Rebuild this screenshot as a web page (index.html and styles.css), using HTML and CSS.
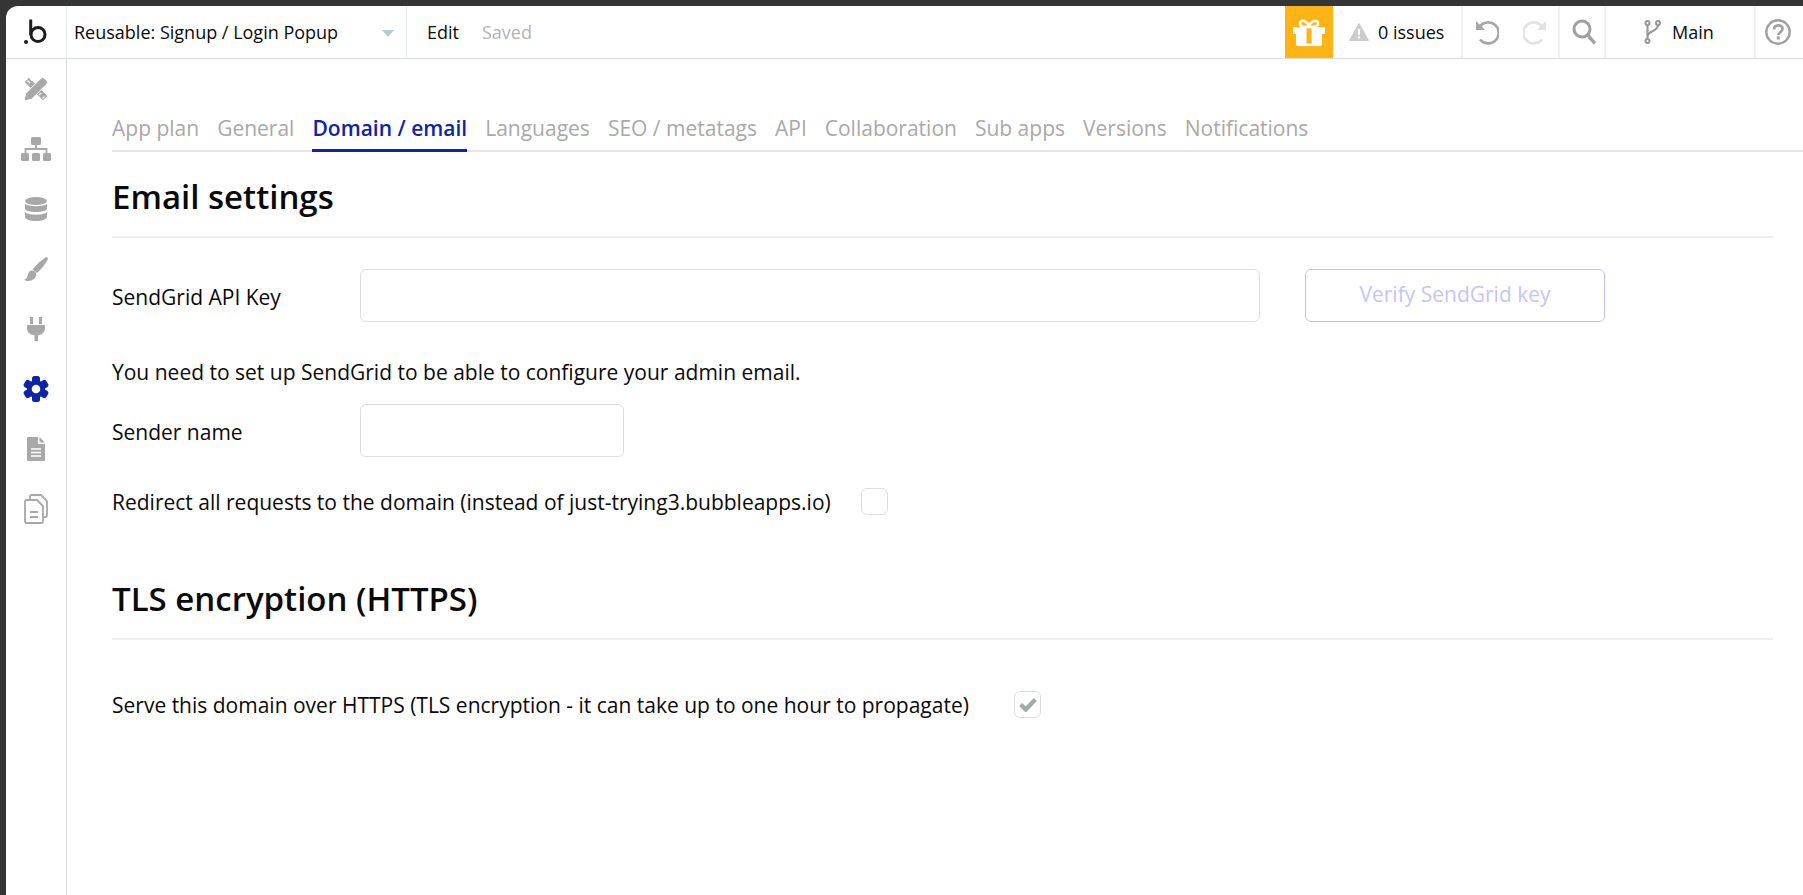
FILE: index.html
```html
<!DOCTYPE html>
<html lang="en">
<head>
<meta charset="utf-8">
<title>Domain / email</title>
<link rel="stylesheet" href="styles.css">
</head>
<body>
<div class="app">
  <header class="topbar">
    <div class="logo-cell">
      <svg class="logo" viewBox="0 0 24 28" width="24" height="28"><circle cx="2" cy="24" r="2" fill="#1c1c1c"/><circle cx="14" cy="16.500" r="7" fill="none" stroke="#1c1c1c" stroke-width="3"/><path d="M6.700 1.500V17" fill="none" stroke="#1c1c1c" stroke-width="3"/></svg>
    </div>
    <div class="page-select">
      <span>Reusable: Signup / Login Popup</span>
      <i class="caret"></i>
    </div>
    <div class="edit-status"><span class="edit">Edit</span><span class="saved">Saved</span></div>
    <div class="gift">
      <svg viewBox="0 0 32 27" width="32" height="27"><path d="M0 8h32v7H0zM3 15h26v10a2 2 0 0 1-2 2H5a2 2 0 0 1-2-2z" fill="#fff"/><rect x="13.500" y="8" width="5" height="16.500" fill="#fdb414"/><path d="M16 8c-3 0-9 .5-9-3.500 0-4.500 7.500-3.500 9 3.500zM16 8c3 0 9 .5 9-3.500 0-4.500-7.500-3.500-9 3.500z" fill="none" stroke="#fff" stroke-width="2.600"/></svg>
    </div>
    <div class="issues">
      <svg viewBox="0 0 20 18" width="20" height="18"><path d="M10 0.500 19.500 17.500H0.500z" fill="#ccc" stroke="#ccc" stroke-linejoin="round"/><path d="M8.800 6h2.400l-.4 6H9.200zM8.900 13.300h2.200v2.200H8.900z" fill="#fff"/></svg>
      <span>0 issues</span>
    </div>
    <div class="history">
      <svg viewBox="0 0 24 26" width="24" height="26"><path d="M4.500 8A10.500 10.500 0 1 1 5 20.500" fill="none" stroke="#a6a6a6" stroke-width="2.600"/><path d="M1 2v9h9z" fill="#a6a6a6"/></svg>
      <svg viewBox="0 0 24 26" width="24" height="26"><path d="M19.500 8A10.500 10.500 0 1 0 19 20.500" fill="none" stroke="#e2e2e2" stroke-width="2.600"/><path d="M23 2v9h-9z" fill="#e2e2e2"/></svg>
    </div>
    <div class="search">
      <svg viewBox="0 0 24 26" width="24" height="26"><circle cx="10" cy="10" r="8" fill="none" stroke="#a0a0a0" stroke-width="3"/><path d="M15.500 16 23 24.500" stroke="#a0a0a0" stroke-width="3.400" fill="none"/></svg>
    </div>
    <div class="branch">
      <svg viewBox="0 0 18 24" width="18" height="24"><g fill="none" stroke="#9b9b9b" stroke-width="2.200"><circle cx="3.500" cy="3" r="2"/><circle cx="3.500" cy="21" r="2"/><circle cx="14" cy="3" r="2"/><path d="M3.500 5v14M14 5c0 7-10.500 5-10.500 12"/></g></svg>
      <span>Main</span>
    </div>
    <div class="help">
      <svg viewBox="0 0 26 26" width="26" height="26"><circle cx="13" cy="13" r="11.700" fill="none" stroke="#a0a0a0" stroke-width="2.400"/><path d="M9 10.500c0-5.500 8.500-5.500 8.500-.5 0 3-4 3-4 6" fill="none" stroke="#a0a0a0" stroke-width="2.800"/><rect x="11.800" y="17.500" width="3" height="3" fill="#a0a0a0"/></svg>
    </div>
  </header>
  <div class="workspace">
    <nav class="sidebar">
      <a class="side-item">
        <svg viewBox="0 0 24 24" width="24" height="24"><path d="M.800 5 5 .800 11.500 7.300 7.300 11.500zM12.500 16.700 16.700 12.500 23.200 19 19 23.200z" fill="#a8a8a8"/><path d="M3.500 3.500 6 6M6.500 1.800 8.500 3.800M15 18l2-2M18.500 21.500l2-2" stroke="#fff" stroke-width="1.200"/><path d="M0 24l1.700-7.500L16.500 1.700c1.500-1.500 3-1.500 4.300 0l1.500 1.500c1.500 1.500 1.500 3 0 4.300L7.500 22.300z" fill="#a8a8a8" stroke="#fff" stroke-width="1"/></svg>
      </a>
      <a class="side-item">
        <svg viewBox="0 0 30 24" width="30" height="24"><path d="M15 6v6M4.500 17v-5h21v5" fill="none" stroke="#a8a8a8" stroke-width="1.800"/><rect x="10" y="0" width="10" height="8" rx="1.500" fill="#a8a8a8"/><rect x="0" y="16" width="8" height="8" rx="1.500" fill="#a8a8a8"/><rect x="11" y="16" width="8" height="8" rx="1.500" fill="#a8a8a8"/><rect x="22" y="16" width="8" height="8" rx="1.500" fill="#a8a8a8"/></svg>
      </a>
      <a class="side-item">
        <svg viewBox="0 0 22 24" width="22" height="24"><ellipse cx="11" cy="4" rx="11" ry="4" fill="#a8a8a8"/><path d="M0 6.500C2 10 20 10 22 6.500V12c-1 4-21 4-22 0zM0 15c2 3.500 20 3.500 22 0v5c-1 5.300-21 5.300-22 0z" fill="#a8a8a8"/></svg>
      </a>
      <a class="side-item">
        <svg viewBox="0 0 24 24" width="24" height="24"><path d="M8.500 12.500C12.500 7.500 17.500 3 21.500.500c1.700-.9 3 .3 2.200 2C21.500 7 17 12.500 13 16z" fill="#a8a8a8"/><path d="M7 13.500c2.500-.5 5 1 5.300 3.500C12.500 21 8.500 24 4.500 24 2.500 24 1 23.500 0 22.500c1.800-.3 2.800-1 3.300-3 .4-2.700 1.700-5.500 3.700-6z" fill="#a8a8a8"/></svg>
      </a>
      <a class="side-item">
        <svg viewBox="0 0 18 24" width="18" height="24"><path d="M3 0h3v7H3zM12 0h3v7h-3zM0 8h18v3c0 4-2.500 6.500-7 7.300V24H7.500v-5.700C2.500 17.500 0 15 0 11z" fill="#a8a8a8"/></svg>
      </a>
      <a class="side-item">
        <svg viewBox="0 0 26 26" width="26" height="26"><g fill="#0d24a8"><rect x="9" y="0" width="8" height="26" rx="2.500"/><rect x="9" y="0" width="8" height="26" rx="2.500" transform="rotate(60 13 13)"/><rect x="9" y="0" width="8" height="26" rx="2.500" transform="rotate(120 13 13)"/><circle cx="13" cy="13" r="9"/></g><circle cx="13" cy="13" r="4.300" fill="#fff"/></svg>
      </a>
      <a class="side-item">
        <svg viewBox="0 0 18 24" width="18" height="24"><path d="M0 1a1 1 0 0 1 1-1h10v7h7v16a1 1 0 0 1-1 1H1a1 1 0 0 1-1-1zM12.500 0 18 5.500h-5.500z" fill="#a8a8a8"/><path d="M4 12h10M4 15.500h10M4 19h10" stroke="#fff" stroke-width="1.600"/></svg>
      </a>
      <a class="side-item">
        <svg viewBox="0 0 24 30" width="24" height="30"><g fill="none" stroke="#a8a8a8" stroke-width="1.800"><path d="M6 5V2.500A1.500 1.500 0 0 1 7.500 1H17l6 6v14.500a1.500 1.500 0 0 1-1.500 1.500H19"/><path d="M1 7.500A1.500 1.500 0 0 1 2.500 6H13l6 6v15.500a1.500 1.500 0 0 1-1.500 1.500h-15A1.500 1.500 0 0 1 1 27.500z"/><path d="M6 18h8M6 23h8"/></g></svg>
      </a>
    </nav>
    <main class="content">
      <nav class="tabs">
        <a class="tab">App plan</a>
        <a class="tab">General</a>
        <a class="tab active">Domain / email</a>
        <a class="tab">Languages</a>
        <a class="tab">SEO / metatags</a>
        <a class="tab">API</a>
        <a class="tab">Collaboration</a>
        <a class="tab">Sub apps</a>
        <a class="tab">Versions</a>
        <a class="tab">Notifications</a>
      </nav>
      <section class="panel">
        <h2 class="section-title">Email settings</h2>
        <div class="field-row key-row">
          <label class="field-label">SendGrid API Key</label>
          <div class="input wide"></div>
          <div class="verify">Verify SendGrid key</div>
        </div>
        <p class="note">You need to set up SendGrid to be able to configure your admin email.</p>
        <div class="field-row sender-row">
          <label class="field-label">Sender name</label>
          <div class="input narrow"></div>
        </div>
        <div class="check-row redirect-row">
          <span>Redirect all requests to the domain (instead of just-trying3.bubbleapps.io)</span>
          <i class="checkbox"></i>
        </div>
        <h2 class="section-title tls">TLS encryption (HTTPS)</h2>
        <div class="check-row https-row">
          <span>Serve this domain over HTTPS (TLS encryption - it can take up to one hour to propagate)</span>
          <i class="checkbox">
            <svg viewBox="0 0 16 13" width="18" height="15"><path d="M1.500 6.500 6 11 14.500 2" fill="none" stroke="#a3abab" stroke-width="3.800"/></svg>
          </i>
        </div>
      </section>
    </main>
  </div>
</div>
</body>
</html>
```
FILE: styles.css
```css
* { box-sizing: border-box; }
html, body { height: 100%; }
body {
  margin: 0;
  background: #353535;
  font-family: "Open Sans", "Noto Sans", sans-serif;
  color: #0a0a0a;
  overflow: hidden;
}
.app {
  margin: 6px 0 0 6px;
  height: 889px;
  background: #fff;
  border-top-left-radius: 12px;
  overflow: hidden;
  display: flex;
  flex-direction: column;
}
.topbar {
  height: 53px;
  flex: none;
  display: flex;
  align-items: stretch;
  border-bottom: 1px solid #d9dcde;
  font-size: 18px;
}
.logo-cell {
  width: 61px;
  border-right: 1px solid #e4f0f2;
  display: flex;
  align-items: center;
  justify-content: center;
  padding-right: 0;
}
.page-select {
  width: 340px;
  padding: 0 12px 0 7px;
  border-right: 1px solid #e8edf0;
  display: flex;
  align-items: center;
  justify-content: space-between;
}
.caret {
  width: 0;
  height: 0;
  border-left: 6px solid transparent;
  border-right: 6px solid transparent;
  border-top: 7px solid #bdc9d0;
  margin-top: 2px;
}
.edit-status {
  flex: 1;
  display: flex;
  align-items: center;
  padding-left: 20px;
  gap: 23px;
}
.saved { color: #b4b4b4; }
.gift {
  width: 48px;
  background: #fdb414;
  display: flex;
  align-items: center;
  justify-content: center;
}
.issues {
  width: 130px;
  display: flex;
  align-items: center;
  padding-left: 16px;
  gap: 9px;
  border-right: 2px solid #eef0f2;
}
.history {
  width: 97px;
  display: flex;
  align-items: center;
  padding-left: 12px;
  gap: 24px;
  border-right: 2px solid #eef0f2;
}
.search {
  width: 46px;
  display: flex;
  align-items: center;
  padding-left: 12px;
  border-right: 2px solid #eef0f2;
}
.branch {
  width: 150px;
  display: flex;
  align-items: center;
  padding-left: 38px;
  gap: 10px;
  border-right: 2px solid #eef0f2;
}
.help {
  width: 47px;
  flex: none;
  display: flex;
  align-items: center;
  padding-left: 9px;
}
.workspace {
  flex: 1;
  display: flex;
  min-height: 0;
}
.sidebar {
  width: 61px;
  flex: none;
  border-right: 1px solid #dcdfe1;
  display: flex;
  flex-direction: column;
}
.side-item {
  height: 60px;
  flex: none;
  display: flex;
  align-items: center;
  justify-content: center;
  padding-right: 1px;
}
.content {
  flex: 1;
  padding-top: 50px;
}
.tabs {
  margin-left: 45px;
  display: flex;
  gap: 18px;
  border-bottom: 2px solid #e5e5e5;
  height: 43px;
  font-size: 21px;
}
.tab {
  color: #a9a9a9;
  height: 43px;
  line-height: 38px;
  white-space: nowrap;
}
.tab.active {
  color: #0d24a8;
  font-weight: 600;
  border-bottom: 3px solid #0d24a8;
}
.panel {
  margin-left: 45px;
  margin-right: 30px;
  font-size: 21px;
}
.section-title {
  margin: 0;
  font-size: 33px;
  font-weight: 600;
  line-height: 44px;
  height: 86px;
  padding-top: 23px;
  border-bottom: 2px solid #eeeeee;
  color: #0a0a0a;
}
.field-row {
  display: flex;
  align-items: center;
}
.key-row {
  margin-top: 31px;
  height: 53px;
}
.field-label {
  width: 248px;
  flex: none;
  padding-top: 2px;
}
.input {
  height: 53px;
  border: 1.500px solid #dedede;
  border-radius: 6px;
  background: #fff;
}
.input.wide { width: 900px; }
.input.narrow { width: 264px; }
.verify {
  margin-left: 45px;
  width: 300px;
  height: 53px;
  border: 1.500px solid #c0c0f2;
  border-radius: 6px;
  display: flex;
  align-items: center;
  justify-content: center;
  color: #c6c6f6;
  padding-bottom: 3px;
}
.note {
  margin: 0;
  height: 82px;
  line-height: 28px;
  padding-top: 36px;
}
.sender-row {
  height: 53px;
}
.check-row {
  display: flex;
  align-items: center;
}
.redirect-row {
  margin-top: 31px;
  height: 27px;
}
.redirect-row span { width: 749px; }
.https-row {
  margin-top: 51px;
  height: 27px;
}
.https-row span { width: 902px; }
.checkbox {
  width: 27px;
  height: 27px;
  border: 1.500px solid #dedede;
  border-radius: 6px;
  background: #fff;
  display: flex;
  align-items: center;
  justify-content: center;
}
.tls {
  margin-top: 39px;
}
```
